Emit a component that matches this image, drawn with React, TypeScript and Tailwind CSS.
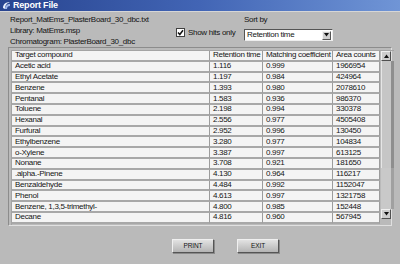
import React from 'react';

const rows: [string, string, string, string][] = [
  ['Acetic acid', '1.116', '0.999', '1966954'],
  ['Ethyl Acetate', '1.197', '0.984', '424964'],
  ['Benzene', '1.393', '0.980', '2078610'],
  ['Pentanal', '1.583', '0.936', '986370'],
  ['Toluene', '2.198', '0.994', '330378'],
  ['Hexanal', '2.556', '0.977', '4505408'],
  ['Furfural', '2.952', '0.996', '130450'],
  ['Ethylbenzene', '3.280', '0.977', '104834'],
  ['o-Xylene', '3.387', '0.997', '613125'],
  ['Nonane', '3.708', '0.921', '181650'],
  ['.alpha.-Pinene', '4.130', '0.964', '116217'],
  ['Benzaldehyde', '4.484', '0.992', '1152047'],
  ['Phenol', '4.613', '0.997', '1321758'],
  ['Benzene, 1,3,5-trimethyl-', '4.800', '0.985', '152448'],
  ['Decane', '4.816', '0.960', '567945'],
];

const cell = 'h-[10.8px] flex items-center pl-[3px] bg-[#f4f4f4] border-b-2 border-r border-b-[#a8a8a8] border-r-[#9c9c9c] whitespace-nowrap overflow-hidden';

function Row({ values }: { values: string[] }) {
  return (
    <div className="grid grid-cols-[198px_53px_70px_47px]">
      {values.map((v, i) => (
        <div key={i} className={cell}>
          {v}
        </div>
      ))}
    </div>
  );
}

function Button({ label }: { label: string }) {
  return (
    <div className="w-[42px] h-[14px] flex items-center justify-center text-[6.5px] tracking-[-0.1px] bg-gradient-to-b from-[#e2e2e2] to-[#b4b4b4] border border-t-[#f0f0f0] border-l-[#f0f0f0] border-r-[#555555] border-b-[#555555] shadow-[1px_1px_0_#8a8a8a]">
      {label}
    </div>
  );
}

export default function App() {
  return (
    <div className="w-[400px] h-[264px] bg-[#bababa] flex flex-col overflow-hidden text-[#141414] font-['Liberation_Sans',Arial,sans-serif] text-[8px] tracking-[-0.3px]">
      <div className="h-[12px] flex items-center gap-[2px] pl-[2px] bg-gradient-to-r from-[#28448f] via-[#4265b5] to-[#7095d6] border-b border-[#d6d6d6]">
        <svg width="9" height="9" viewBox="0 0 9 9">
          <path d="M1 7 C1 3 4 1 8 1 C5 2 3 4 3 8 Z" fill="#e8eefc" />
          <path d="M3 8 C3 5 5 3 8 3 L8 5 C6 5 5 6 5 8 Z" fill="#9fb6ea" />
        </svg>
        <span className="text-white font-bold text-[9px] tracking-[-0.2px] leading-none">Report File</span>
      </div>
      <div className="h-[35px] flex pl-[10px]">
        <div className="w-[164px] pt-[2px] leading-[11px] whitespace-nowrap">
          <div>Report_MatEms_PlasterBoard_30_dbc.txt</div>
          <div>Library: MatEms.msp</div>
          <div>Chromatogram: PlasterBoard_30_dbc</div>
        </div>
        <div className="w-[70px] pt-[16px] pl-[2px] flex items-start gap-[3px]">
          <div className="w-[9px] h-[9px] bg-white border border-[#404040] flex items-center justify-center">
            <svg width="7" height="7" viewBox="0 0 7 7">
              <path d="M1 3.5 L2.8 5.5 L6 1.2" stroke="#111" strokeWidth="1.5" fill="none" />
            </svg>
          </div>
          <span className="leading-[9px] whitespace-nowrap">Show hits only</span>
        </div>
        <div className="pt-[3px] flex flex-col">
          <span className="leading-[10px]">Sort by</span>
          <div className="mt-[4px] w-[89px] h-[12px] bg-white border border-t-[#555555] border-l-[#555555] border-r-[#eeeeee] border-b-[#eeeeee] flex items-center justify-between pl-[2px]">
            <span>Retention time</span>
            <div className="w-[9px] h-[9px] mr-[1px] bg-[#cfcfcf] border border-t-[#f4f4f4] border-l-[#f4f4f4] border-r-[#555555] border-b-[#555555] flex items-center justify-center">
              <svg width="5" height="4" viewBox="0 0 5 4">
                <path d="M0 0 H5 L2.5 3.5 Z" fill="#111" />
              </svg>
            </div>
          </div>
        </div>
      </div>
      <div className="mx-[8px] h-[179px] border border-t-[#8c8c8c] border-l-[#8c8c8c] border-r-[#e0e0e0] border-b-[#e0e0e0] pl-[2px] pt-[2px] flex">
        <div className="flex flex-col border-l border-t border-[#a4a4a4]">
          <Row values={['Target compound', 'Retention time', 'Matching coefficient', 'Area counts']} />
          {rows.map((r, i) => (
            <Row key={i} values={r} />
          ))}
        </div>
        <div className="w-[14px] flex flex-col h-[172px] border-t border-[#a4a4a4]">
          <div className="w-[10px] h-[10px] ml-[1px] bg-[#cdcdcd] border border-t-[#f0f0f0] border-l-[#f0f0f0] border-r-[#505050] border-b-[#505050] flex items-center justify-center">
            <svg width="5" height="4" viewBox="0 0 5 4">
              <path d="M0 4 H5 L2.5 0.5 Z" fill="#111" />
            </svg>
          </div>
          <div className="flex-1 flex flex-col">
            <div className="h-[107px] flex">
              <div className="w-[10px] ml-[1px] bg-[#c6c6c6] border-l border-[#e6e6e6]" />
              <div className="w-[3px] bg-[#8e8e8e]" />
            </div>
            <div className="flex-1 flex">
              <div className="w-[10px] ml-[1px] bg-[#c9c9c9]" />
              <div className="w-[3px] bg-[#a0a0a0]" />
            </div>
          </div>
          <div className="w-[10px] h-[10px] ml-[1px] mb-[3px] bg-[#cdcdcd] border border-t-[#f0f0f0] border-l-[#f0f0f0] border-r-[#505050] border-b-[#505050] flex items-center justify-center">
            <svg width="5" height="4" viewBox="0 0 5 4">
              <path d="M0 0 H5 L2.5 3.5 Z" fill="#111" />
            </svg>
          </div>
        </div>
      </div>
      <div className="flex gap-[23px] pl-[172px] pt-[13px]">
        <Button label="PRINT" />
        <Button label="EXIT" />
      </div>
    </div>
  );
}
